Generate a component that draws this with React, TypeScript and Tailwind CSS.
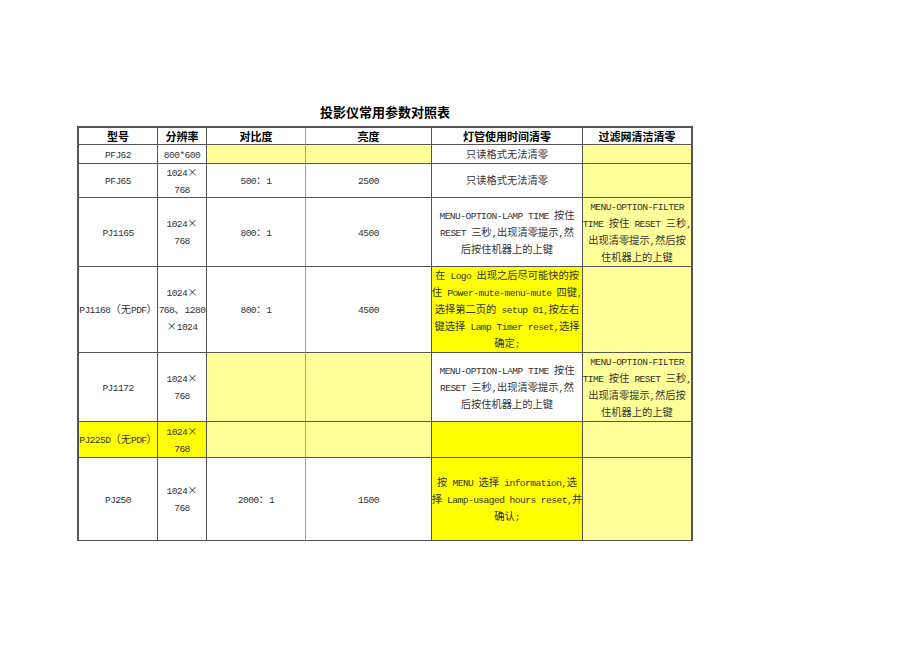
import clsx from "clsx"

type Bg = "w" | "l" | "y"
type CellData = { lines?: string[]; bg?: Bg; spill?: boolean }

const header = ["型号", "分辨率", "对比度", "亮度", "灯管使用时间清零", "过滤网清洁清零"]

const lampLines = ["MENU-OPTION-LAMP TIME 按住", "RESET 三秒,出现清零提示,然", "后按住机器上的上键"]
const filterLines = ["MENU-OPTION-FILTER", "TIME 按住 RESET 三秒,", "出现清零提示,然后按", "住机器上的上键"]

const rows: CellData[][] = [
  [
    { lines: ["PFJ62"] },
    { lines: ["800*600"] },
    { bg: "l" },
    { bg: "l" },
    { lines: ["只读格式无法清零"] },
    { bg: "l" },
  ],
  [
    { lines: ["PFJ65"] },
    { lines: ["1024×", "768"] },
    { lines: ["500：1"] },
    { lines: ["2500"] },
    { lines: ["只读格式无法清零"] },
    { bg: "l" },
  ],
  [
    { lines: ["PJ1165"] },
    { lines: ["1024×", "768"] },
    { lines: ["800：1"] },
    { lines: ["4500"] },
    { lines: lampLines },
    { bg: "l", lines: filterLines },
  ],
  [
    { lines: ["PJ1168（无PDF）"], spill: true },
    { lines: ["1024×", "768、1280", "×1024"], spill: true },
    { lines: ["800：1"] },
    { lines: ["4500"] },
    {
      bg: "y",
      lines: [
        "在 Logo 出现之后尽可能快的按",
        "住 Power-mute-menu-mute 四键,",
        "选择第二页的 setup 01,按左右",
        "键选择 Lamp Timer reset,选择",
        "确定;",
      ],
    },
    { bg: "l" },
  ],
  [
    { lines: ["PJ1172"] },
    { lines: ["1024×", "768"] },
    { bg: "l" },
    { bg: "l" },
    { lines: lampLines },
    { bg: "l", lines: filterLines },
  ],
  [
    { bg: "y", lines: ["PJ225D（无PDF）"] },
    { bg: "y", lines: ["1024×", "768"] },
    { bg: "l" },
    { bg: "l" },
    { bg: "y" },
    { bg: "l" },
  ],
  [
    { lines: ["PJ250"] },
    { lines: ["1024×", "768"] },
    { lines: ["2000：1"] },
    { lines: ["1500"] },
    { bg: "y", lines: ["按 MENU 选择 information,选", "择 Lamp-usaged hours reset,并", "确认;"] },
    { bg: "l" },
  ],
]

// ascii runs get the narrow mono face, like SimSun's half-width latin
function Mixed({ text }: { text: string }) {
  const parts = text.split(/([\x20-\x7e]+)/)
  return (
    <>
      {parts.map((p, i) =>
        /^[\x20-\x7e]+$/.test(p) ? (
          <span key={i} className="font-['Liberation_Mono',monospace] text-[9.6px] leading-none tracking-[-0.55px]">
            {p}
          </span>
        ) : (
          p
        ),
      )}
    </>
  )
}

function cellClass(col: number, bg?: Bg) {
  return clsx(
    "flex flex-col items-center justify-center border-b border-[#555] text-center whitespace-nowrap",
    col === 5 ? "border-r-2" : "border-r",
    col === 2 && "border-r-[#a0a0a0]",
    bg === "l" && "bg-[#ffff99]",
    bg === "y" && "bg-[#ffff00]",
  )
}

export default function App() {
  return (
    <div className="w-[920px] h-[651px] bg-white pt-[103px] pl-[77px] font-['Noto_Sans_CJK_SC',sans-serif]">
      <h1 className="w-[616px] text-center text-[13px] leading-[18px] font-bold text-black">投影仪常用参数对照表</h1>
      <div className="mt-[5px] grid w-[616px] grid-cols-[79px_49px_99px_126px_151px_110px] grid-rows-[17px_19px_34px_69px_86px_69px_36px_83px] border-l-2 border-t-2 border-[#555]">
        {header.map((h, col) => (
          <div key={h} className={clsx(cellClass(col), "overflow-hidden text-[11px] leading-[16px] font-bold text-black")}>
            {h}
          </div>
        ))}
        {rows.map((row, r) =>
          row.map((c, col) => (
            <div
              key={`${r}-${col}`}
              className={clsx(cellClass(col, c.bg), "pb-[2px] text-[10.25px] text-[#333]", !c.spill && "overflow-hidden")}
            >
              {c.lines?.map((line, i) => (
                <div key={i} className="h-[17px] shrink-0 leading-[17px]">
                  <Mixed text={line} />
                </div>
              ))}
            </div>
          )),
        )}
      </div>
    </div>
  )
}
